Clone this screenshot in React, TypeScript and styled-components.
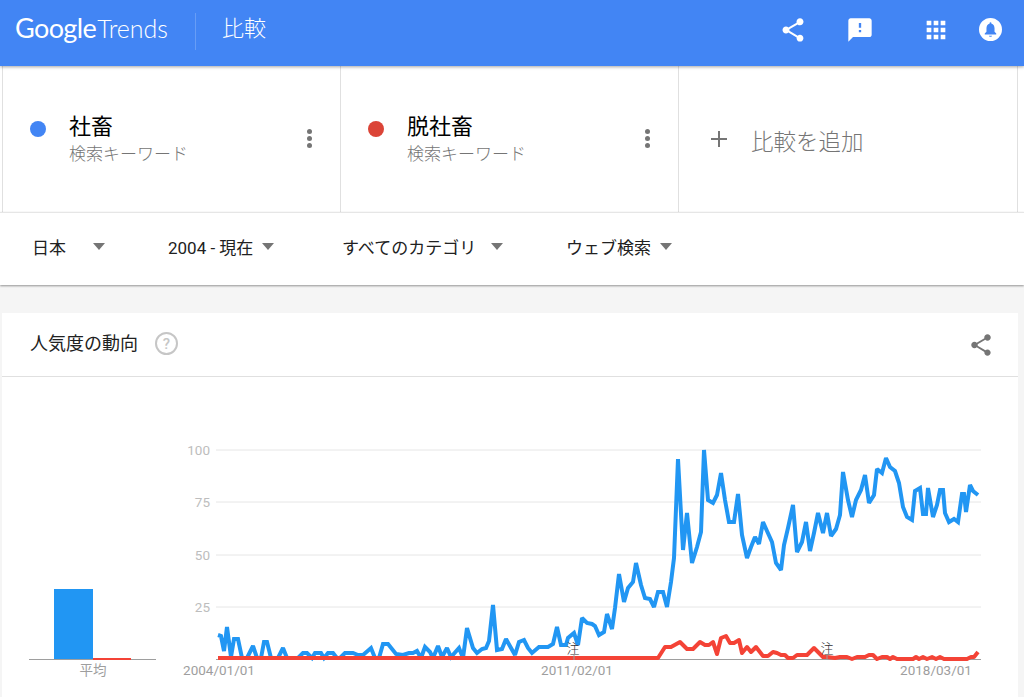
import styled, { createGlobalStyle } from 'styled-components'

const blue = '#2196f3'
const red = '#f44336'

const bluePoints = '218,635 221,636 224,651 227,627 231,657 234,639 238,639 242,658 247,658 253,646 257,658 261,658 264,642 267,642 271,658 278,658 283,648 287,658 298,658 303,653 307,653 312,658 315,653 321,653 324,658 328,653 333,653 337,658 340,658 345,653 353,653 358,655 363,655 371,648 375,658 379,658 383,644 388,644 396,654 403,655 409,653 413,653 417,651 421,658 425,647 430,652 433,658 438,646 442,657 447,648 451,657 459,648 463,658 467,628 473,648 477,653 482,649 486,648 489,641 493,605 497,650 502,649 506,639 515,655 519,642 524,640 528,648 532,653 539,647 548,647 553,644 557,627 561,645 566,645 568,638 574,633 578,645 582,618 587,623 592,624 595,626 599,635 604,632 607,614 612,629 615,608 619,574 624,602 628,588 633,582 636,563 641,585 645,598 650,599 654,607 658,592 663,592 667,607 671,582 674,558 678,459 683,550 687,513 692,563 697,547 701,532 704,450 708,500 713,503 717,495 721,473 725,500 729,522 734,522 738,494 742,535 747,558 751,547 755,537 759,544 763,522 767,531 772,542 776,563 781,570 784,545 788,528 793,505 797,552 802,542 806,522 810,551 814,533 818,513 823,533 827,513 831,536 836,529 840,515 843,472 848,500 852,517 856,500 861,490 865,475 869,503 874,495 877,469 882,473 886,458 890,467 895,471 899,483 903,507 907,517 912,520 915,491 920,488 923,514 926,514 928,488 933,517 937,505 940,490 943,490 945,513 949,522 954,519 958,522 962,494 964,494 966,512 970,485 973,491 978,495'

const redPoints = '218,658 658,658 665,647 671,647 680,642 687,649 693,649 700,642 705,645 709,645 713,642 717,654 721,638 726,636 730,643 734,643 739,640 742,653 747,647 751,652 756,647 763,656 768,656 773,652 777,653 781,655 785,655 788,658 793,658 797,655 807,655 814,648 823,657 827,657 835,658 840,657 847,657 852,659 857,657 865,657 869,655 873,655 877,659 882,657 887,657 890,659 893,657 897,659 913,659 916,657 919,659 923,657 927,659 932,657 936,659 940,657 944,659 967,659 971,657 974,657 978,652'

const GlobalStyle = createGlobalStyle`
  html, body {
    margin: 0;
    background: #f5f5f5;
  }
  body {
    width: 1024px;
    height: 697px;
    overflow: hidden;
    font-family: Roboto, "Noto Sans CJK JP", sans-serif;
  }
`

const Page = styled.div`
  display: flex;
  flex-direction: column;
  height: 697px;
  overflow: hidden;
`

const Header = styled.header`
  position: relative;
  z-index: 2;
  display: flex;
  align-items: center;
  height: 66px;
  flex: none;
  padding-left: 15px;
  background: #4285f4;
  box-shadow: 0 1px 3px rgba(0, 0, 0, 0.35);
  color: #fff;
`

const Logo = styled.div`
  display: flex;
  align-items: baseline;
  width: 180px;
  margin-top: -11px;
  font-family: Lato, sans-serif;
  font-size: 27px;
  letter-spacing: -0.6px;
`

const LogoTrends = styled.span`
  margin-left: 1px;
  font-size: 25px;
  font-weight: 300;
  letter-spacing: 0;
`

const HeaderDivider = styled.div`
  width: 1px;
  height: 37px;
  margin-top: -4px;
  background: rgba(255, 255, 255, 0.2);
`

const PageTitle = styled.h1`
  margin: -9px 0 0 26px;
  font-size: 22px;
  font-weight: 300;
  line-height: 28px;
`

const HeaderIcons = styled.div`
  display: flex;
  align-items: center;
  margin-left: auto;
  margin-top: -7px;
  padding-right: 22px;
`

const HeaderIcon = styled.svg<{ $gap: number; $size?: number }>`
  display: block;
  width: ${(p) => p.$size ?? 28}px;
  height: ${(p) => p.$size ?? 28}px;
  margin-left: ${(p) => p.$gap}px;
  fill: #fff;
`

const TermsBand = styled.section`
  flex: none;
  padding: 0 6px 0 2px;
  background: #fff;
`

const Terms = styled.div`
  display: flex;
  height: 146px;
  border-left: 1px solid #e0e0e0;
  border-right: 1px solid #e0e0e0;
`

const Term = styled.div`
  position: relative;
  display: flex;
  width: 338px;
  flex: none;
  box-sizing: border-box;
  padding: 48px 0 0 27px;
  border-right: 1px solid #e0e0e0;
`

const Dot = styled.span<{ $color: string }>`
  width: 16px;
  height: 16px;
  margin-top: 7px;
  border-radius: 50%;
  background: ${(p) => p.$color};
`

const TermText = styled.div`
  margin-left: 23px;
`

const TermName = styled.div`
  font-size: 22px;
  line-height: 26px;
  color: #000;
`

const TermKind = styled.div`
  margin-top: 3px;
  font-size: 17px;
  font-weight: 300;
  line-height: 22px;
  color: #757575;
`

const MoreButton = styled.div`
  position: absolute;
  top: 63px;
  right: 28px;
  display: flex;
  flex-direction: column;
  gap: 2px;
`

const MoreDot = styled.span`
  width: 5px;
  height: 5px;
  border-radius: 50%;
  background: #757575;
`

const AddTerm = styled.div`
  display: flex;
  align-items: center;
  flex: 1;
  padding-left: 32px;
  color: #757575;
`

const AddPlus = styled.svg`
  width: 16px;
  height: 16px;
  stroke: #757575;
  stroke-width: 2;
`

const AddLabel = styled.span`
  margin-left: 24px;
  padding-top: 1px;
  font-size: 22.5px;
  font-weight: 300;
`

const Filters = styled.section`
  position: relative;
  z-index: 1;
  display: flex;
  align-items: center;
  height: 73px;
  flex: none;
  box-sizing: border-box;
  padding: 0 0 5px 32px;
  background: #fff;
  border-top: 1px solid #e6e6e6;
  box-shadow: 0 1px 2px rgba(0, 0, 0, 0.4);
`

const Filter = styled.div<{ $width: number }>`
  display: flex;
  align-items: center;
  width: ${(p) => p.$width}px;
  flex: none;
  font-size: 17px;
  color: #212121;
`

const Caret = styled.span<{ $gap: number }>`
  width: 0;
  height: 0;
  margin-left: ${(p) => p.$gap}px;
  border-left: 6px solid transparent;
  border-right: 6px solid transparent;
  border-top: 7px solid #757575;
`

const Card = styled.section`
  flex: 1;
  margin: 28px 6px 0 2px;
  background: #fff;
`

const CardHeader = styled.div`
  display: flex;
  align-items: center;
  height: 64px;
  box-sizing: border-box;
  padding: 0 24px 2px 28px;
  border-bottom: 1px solid #e0e0e0;
`

const CardTitle = styled.h2`
  margin: -3px 0 0;
  font-size: 18px;
  font-weight: 400;
  color: #212121;
`

const HelpIcon = styled.span`
  display: flex;
  align-items: center;
  justify-content: center;
  width: 23px;
  height: 23px;
  margin-left: 17px;
  box-sizing: border-box;
  border: 2px solid #c6c6c6;
  border-radius: 50%;
  font-family: Roboto, sans-serif;
  font-size: 15px;
  font-weight: 500;
  color: #c6c6c6;
`

const CardShare = styled.svg`
  width: 26px;
  height: 26px;
  margin-left: auto;
  margin-top: 3px;
  fill: #757575;
`

const Chart = styled.svg`
  display: block;
`

const AxisLabel = styled.text`
  font-family: Roboto, "Noto Sans CJK JP", sans-serif;
  font-size: 13.5px;
  fill: #9e9e9e;
`

const ValueLabel = styled(AxisLabel)`
  fill: #bdbdbd;
`

const NoteLabel = styled.text`
  font-family: "Noto Sans CJK JP", sans-serif;
  font-size: 13px;
  font-weight: 300;
  fill: #333;
`

const sharePath =
  'M18 16.08c-.76 0-1.44.3-1.96.77L8.91 12.7c.05-.23.09-.46.09-.7s-.04-.47-.09-.7l7.05-4.11c.54.5 1.25.81 2.04.81 1.66 0 3-1.34 3-3s-1.34-3-3-3-3 1.34-3 3c0 .24.04.47.09.7L8.04 9.81C7.5 9.31 6.79 9 6 9c-1.66 0-3 1.34-3 3s1.34 3 3 3c.79 0 1.5-.31 2.04-.81l7.12 4.16c-.05.21-.08.43-.08.65 0 1.61 1.31 2.92 2.92 2.92 1.61 0 2.92-1.31 2.92-2.92s-1.31-2.92-2.92-2.92z'

const TermCard = ({ color, name }: { color: string; name: string }) => (
  <Term>
    <Dot $color={color} />
    <TermText>
      <TermName>{name}</TermName>
      <TermKind>検索キーワード</TermKind>
    </TermText>
    <MoreButton>
      <MoreDot />
      <MoreDot />
      <MoreDot />
    </MoreButton>
  </Term>
)

// chart coordinates are page pixels, the viewBox shifts them by the card's corner
const gridLines = [
  { y: 450, label: '100' },
  { y: 502, label: '75' },
  { y: 555, label: '50' },
  { y: 607, label: '25' },
]

const TrendChart = () => (
  <Chart width="1016" height="320" viewBox="2 377 1016 320">
    {gridLines.map((g) => (
      <g key={g.label}>
        <line x1="216" x2="981" y1={g.y} y2={g.y} stroke="#e6e6e6" strokeWidth="1" />
        <ValueLabel x="210" y={g.y + 5} textAnchor="end">
          {g.label}
        </ValueLabel>
      </g>
    ))}
    <line x1="216" x2="981" y1="659.5" y2="659.5" stroke="#9e9e9e" strokeWidth="1" />
    <line x1="29" x2="156" y1="659.5" y2="659.5" stroke="#9e9e9e" strokeWidth="1" />
    <rect x="54" y="589" width="39" height="70" fill={blue} />
    <rect x="93" y="658" width="38" height="2" fill={red} />
    <AxisLabel x="93" y="675" textAnchor="middle">平均</AxisLabel>
    <AxisLabel x="219" y="675" textAnchor="middle">2004/01/01</AxisLabel>
    <AxisLabel x="577" y="675" textAnchor="middle">2011/02/01</AxisLabel>
    <AxisLabel x="936" y="675" textAnchor="middle">2018/03/01</AxisLabel>
    <polyline points={bluePoints} fill="none" stroke={blue} strokeWidth="4" strokeLinejoin="miter" strokeMiterlimit="2" />
    <polyline points={redPoints} fill="none" stroke={red} strokeWidth="4" strokeLinejoin="round" />
    <line x1="574" x2="574" y1="655" y2="660" stroke="#9e9e9e" strokeWidth="1" />
    <line x1="827" x2="827" y1="655" y2="660" stroke="#9e9e9e" strokeWidth="1" />
    <NoteLabel x="573" y="653" textAnchor="middle">注</NoteLabel>
    <NoteLabel x="827" y="653" textAnchor="middle">注</NoteLabel>
  </Chart>
)

export default function App() {
  return (
    <Page>
      <GlobalStyle />
      <Header>
        <Logo>
          Google<LogoTrends>Trends</LogoTrends>
        </Logo>
        <HeaderDivider />
        <PageTitle>比較</PageTitle>
        <HeaderIcons>
          <HeaderIcon $gap={0} viewBox="0 0 24 24">
            <path d={sharePath} />
          </HeaderIcon>
          <HeaderIcon $gap={39} viewBox="0 0 24 24">
            <path d="M20 2H4c-1.1 0-1.99.9-1.99 2L2 22l4-4h14c1.1 0 2-.9 2-2V4c0-1.1-.9-2-2-2zm-7 12h-2v-2h2v2zm0-4h-2V6h2v4z" />
          </HeaderIcon>
          <HeaderIcon $gap={48} viewBox="0 0 24 24">
            <path d="M4 8h4V4H4v4zm6 12h4v-4h-4v4zm-6 0h4v-4H4v4zm0-6h4v-4H4v4zm6 0h4v-4h-4v4zm6-10v4h4V4h-4zm-6 4h4V4h-4v4zm6 6h4v-4h-4v4zm0 6h4v-4h-4v4z" />
          </HeaderIcon>
          <HeaderIcon $gap={29} $size={23} viewBox="0 0 24 24">
            <path
              fillRule="evenodd"
              d="M12 0a12 12 0 1 0 0 24 12 12 0 0 0 0-24zm0 19.6c-.9 0-1.6-.4-1.6-1.2h3.2c0 .8-.7 1.2-1.6 1.2zm6-2.4H6v-1.1l1.8-1.8v-3.7c0-2.4 1.1-4.2 3.2-4.7v-.5c0-.6.4-1 1-1s1 .4 1 1v.5c2.1.5 3.2 2.3 3.2 4.7v3.7l1.8 1.8v1.1z"
            />
          </HeaderIcon>
        </HeaderIcons>
      </Header>
      <TermsBand>
        <Terms>
          <TermCard color="#4285f4" name="社畜" />
          <TermCard color="#db4437" name="脱社畜" />
          <AddTerm>
            <AddPlus viewBox="0 0 16 16">
              <path d="M0 8h16M8 0v16" fill="none" />
            </AddPlus>
            <AddLabel>比較を追加</AddLabel>
          </AddTerm>
        </Terms>
      </TermsBand>
      <Filters>
        <Filter $width={136}>
          日本<Caret $gap={27} />
        </Filter>
        <Filter $width={174}>
          2004 - 現在<Caret $gap={9} />
        </Filter>
        <Filter $width={224}>
          すべてのカテゴリ<Caret $gap={15} />
        </Filter>
        <Filter $width={140}>
          ウェブ検索<Caret $gap={9} />
        </Filter>
      </Filters>
      <Card>
        <CardHeader>
          <CardTitle>人気度の動向</CardTitle>
          <HelpIcon>?</HelpIcon>
          <CardShare viewBox="0 0 24 24">
            <path d={sharePath} />
          </CardShare>
        </CardHeader>
        <TrendChart />
      </Card>
    </Page>
  )
}
